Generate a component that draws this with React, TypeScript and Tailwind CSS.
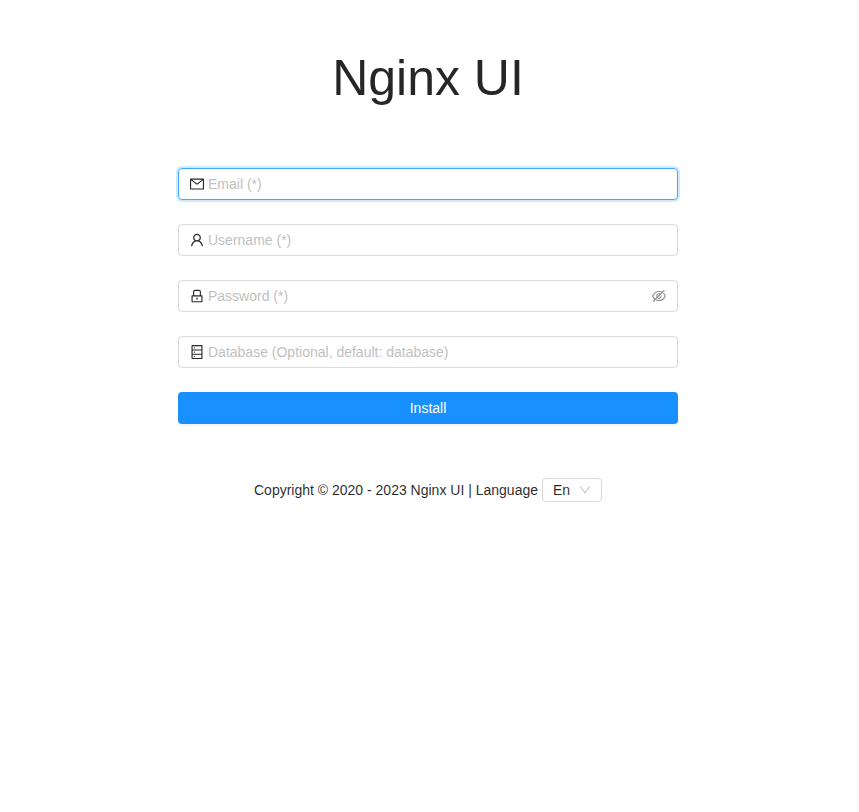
import type { ReactNode } from "react";
import {
  AiOutlineMail,
  AiOutlineUser,
  AiOutlineLock,
  AiOutlineDatabase,
  AiOutlineEyeInvisible,
  AiOutlineDown,
} from "react-icons/ai";

// Trims the built-in margin of the Ant glyphs so they fill their box.
const tight = "64 64 896 896";

type FieldProps = {
  icon: ReactNode;
  placeholder: string;
  type?: string;
  focused?: boolean;
  suffix?: ReactNode;
};

function Field({ icon, placeholder, type = "text", focused = false, suffix }: FieldProps) {
  return (
    <div
      className={
        focused
          ? "flex h-8 items-center rounded-[4px] border border-[#40a9ff] px-[11px] shadow-[0_0_0_2px_rgba(24,144,255,0.2)]"
          : "flex h-8 items-center rounded-[4px] border border-[#d9d9d9] px-[11px]"
      }
    >
      <span className="mr-1 text-black/85">{icon}</span>
      <input
        type={type}
        placeholder={placeholder}
        className="h-[22px] min-w-0 flex-1 bg-transparent text-sm leading-[22px] outline-none placeholder:text-[#bfbfbf]"
      />
      {suffix}
    </div>
  );
}

export default function App() {
  return (
    <main className="flex min-h-screen flex-col items-center bg-white pr-[3px] font-['Liberation_Sans',Arial,sans-serif] text-sm text-black/85">
      <h1 className="mt-[39px] h-[79px] text-[50px] leading-[79px]">Nginx UI</h1>
      <form className="mt-[50px] flex w-[500px] flex-col gap-6">
        <Field icon={<AiOutlineMail size={14} viewBox={tight} />} placeholder="Email (*)" focused />
        <Field icon={<AiOutlineUser size={14} viewBox={tight} />} placeholder="Username (*)" />
        <Field
          icon={<AiOutlineLock size={14} viewBox={tight} />}
          placeholder="Password (*)"
          type="password"
          suffix={
            <AiOutlineEyeInvisible size={14} viewBox={tight} className="ml-1 text-black/45" />
          }
        />
        <Field
          icon={<AiOutlineDatabase size={14} viewBox={tight} />}
          placeholder="Database (Optional, default: database)"
        />
        <button
          type="button"
          className="h-8 rounded-[4px] bg-[#1890ff] text-white shadow-[0_2px_0_rgba(0,0,0,0.045)]"
        >
          Install
        </button>
      </form>
      <footer className="mt-[54px] flex h-6 items-center gap-1 whitespace-nowrap">
        <span>Copyright © 2020 - 2023 Nginx UI | Language</span>
        <button
          type="button"
          className="flex h-6 w-[60px] items-center justify-between rounded-[4px] border border-[#d9d9d9] pr-[10px] pl-[10px]"
        >
          En
          <AiOutlineDown size={12} viewBox={tight} className="text-black/25" />
        </button>
      </footer>
    </main>
  );
}
